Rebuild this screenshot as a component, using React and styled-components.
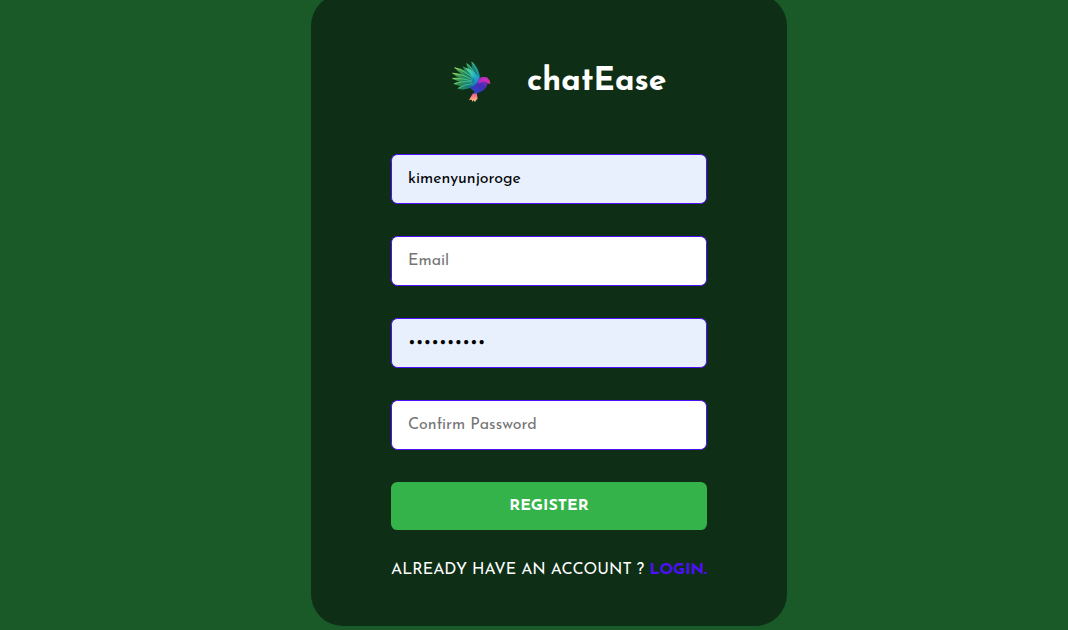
import React from 'react';
import styled, { createGlobalStyle } from 'styled-components';

const GlobalStyle = createGlobalStyle`
  * { box-sizing: border-box; margin: 0; padding: 0; }
  body { background: #1a5928; overflow: hidden; font-family: 'Josefin Sans', Lato, sans-serif; }
`;

const Page = styled.main`
  height: 100vh;
  display: flex;
  justify-content: center;
  align-items: flex-start;
  padding-left: 30px;
  background: #1a5928;
`;

const Card = styled.form`
  width: 476px;
  height: 632px;
  margin-top: -6px;
  padding: 48px 80px;
  display: flex;
  flex-direction: column;
  gap: 32px;
  border-radius: 32px;
  background: #0e2e16;
`;

const Brand = styled.div`
  height: 80px;
  display: flex;
  align-items: center;
  justify-content: center;
  gap: 16px;
`;

const Logo = styled.svg`
  width: 80px;
  height: 80px;
  flex: none;
`;

const Title = styled.h1`
  width: 140px;
  color: #fff;
  font-size: 32px;
  line-height: 32px;
  font-weight: 700;
  white-space: nowrap;
`;

const Field = styled.input`
  flex: none;
  width: 100%;
  height: 50px;
  padding: 0 16px;
  border: 1px solid #4e0eff;
  border-radius: 6.4px;
  outline: none;
  background: ${({ $filled }) => ($filled ? '#e8f0fe' : '#fff')};
  color: #000;
  font-family: inherit;
  font-size: 16px;
  font-weight: 400;
  &::placeholder { color: #757575; opacity: 1; }
`;

const Submit = styled.button`
  flex: none;
  height: 48px;
  border: 0;
  border-radius: 6.4px;
  background: #34b34a;
  color: #fff;
  font-family: inherit;
  font-size: 16px;
  font-weight: 700;
`;

const Footer = styled.p`
  display: flex;
  justify-content: space-between;
  height: 16px;
  line-height: 16px;
  font-size: 16px;
  color: #fff;
  white-space: nowrap;
`;

const Login = styled.a`
  color: #4e0eff;
  font-weight: 700;
`;

const Bird = () => (
  <Logo viewBox="0 0 80 80" aria-hidden="true">
    <defs>
      <linearGradient id="wing" gradientUnits="userSpaceOnUse" x1="38" y1="60" x2="122" y2="92">
        <stop offset="0" stopColor="#5fae48" />
        <stop offset="0.35" stopColor="#2f8f58" />
        <stop offset="0.7" stopColor="#167a78" />
        <stop offset="1" stopColor="#1272a0" />
      </linearGradient>
      <linearGradient id="tips" gradientUnits="userSpaceOnUse" x1="38" y1="60" x2="112" y2="90">
        <stop offset="0" stopColor="#a8e05c" />
        <stop offset="0.5" stopColor="#4ec47c" />
        <stop offset="1" stopColor="#22b0b4" />
      </linearGradient>
      <linearGradient id="cover" x1="0" y1="0" x2="0.8" y2="1">
        <stop offset="0" stopColor="#6adc98" />
        <stop offset="0.5" stopColor="#27b8c0" />
        <stop offset="1" stopColor="#1a6cc8" />
      </linearGradient>
      <linearGradient id="body" x1="0.9" y1="0" x2="0.15" y2="1">
        <stop offset="0" stopColor="#a42ac0" />
        <stop offset="0.45" stopColor="#4a2bb8" />
        <stop offset="1" stopColor="#1a50c0" />
      </linearGradient>
      <linearGradient id="head" x1="0" y1="0" x2="1" y2="0.4">
        <stop offset="0" stopColor="#a52bd0" />
        <stop offset="1" stopColor="#d8309e" />
      </linearGradient>
      <linearGradient id="tail" x1="0.5" y1="0" x2="0.5" y2="1">
        <stop offset="0" stopColor="#ee4f98" />
        <stop offset="0.5" stopColor="#f98f80" />
        <stop offset="1" stopColor="#ffcb80" />
      </linearGradient>
    </defs>
    <g transform="translate(9 8) scale(0.33333)">
      <g fill="url(#wing)">
        <path d="M95 34Q118 50 122 92L104 78Q94 58 95 34Z" />
        <path d="M79 38Q102 50 112 84L98 78Q82 60 79 38Z" />
        <path d="M68 49Q92 56 108 88L92 82Q74 68 68 49Z" />
        <path d="M43 52Q78 56 108 86L88 84Q60 74 43 52Z" />
        <path d="M36 68Q70 68 106 90L86 92Q54 86 36 68Z" />
        <path d="M35 84Q64 78 106 94L90 100Q56 98 35 84Z" />
        <path d="M40 102Q68 84 110 96L92 108Q64 112 40 102Z" />
        <path d="M52 116Q74 94 114 98L96 112Q76 122 52 116Z" />
      </g>
      <g fill="none" stroke="url(#tips)" strokeWidth="3" strokeLinecap="round">
        <path d="M96 38Q111 54 116 84" />
        <path d="M81 43Q98 54 108 80" />
        <path d="M45 54Q76 62 98 84" />
        <path d="M39 70Q68 72 96 88" />
        <path d="M39 86Q66 84 94 92" />
        <path d="M44 101Q66 92 96 96" />
        <path d="M56 114Q74 102 100 101" />
      </g>
      <path d="M75 53Q106 58 121 94L118 110L102 114Q103 80 75 53Z" fill="url(#cover)" />
      <path d="M98 80Q110 92 108 112L92 114Q98 98 98 80Z" fill="#1a86a8" />
      <path d="M118 84Q130 79 142 83Q150 90 151 103L143 100Q138 122 118 127L97 138L104 123Q90 118 92 110Q112 107 118 84Z" fill="url(#body)" />
      <path d="M118 86Q128 78 142 83Q150 90 151 103L143 98Q132 92 114 101Z" fill="url(#head)" />
      <path d="M98 131L110 130L113 146L109 150L105 156L101 151L97 155L95 149L87 150Z" fill="url(#tail)" />
    </g>
  </Logo>
);

export default function App() {
  return (
    <>
      <GlobalStyle />
      <Page>
        <Card>
          <Brand>
            <Bird />
            <Title>chatEase</Title>
          </Brand>
          <Field type="text" defaultValue="kimenyunjoroge" $filled />
          <Field type="email" placeholder="Email" />
          <Field type="password" defaultValue="chatease10" $filled />
          <Field type="password" placeholder="Confirm Password" />
          <Submit type="button">REGISTER</Submit>
          <Footer>
            <span>ALREADY HAVE AN ACCOUNT ?</span>
            <Login>LOGIN.</Login>
          </Footer>
        </Card>
      </Page>
    </>
  );
}
